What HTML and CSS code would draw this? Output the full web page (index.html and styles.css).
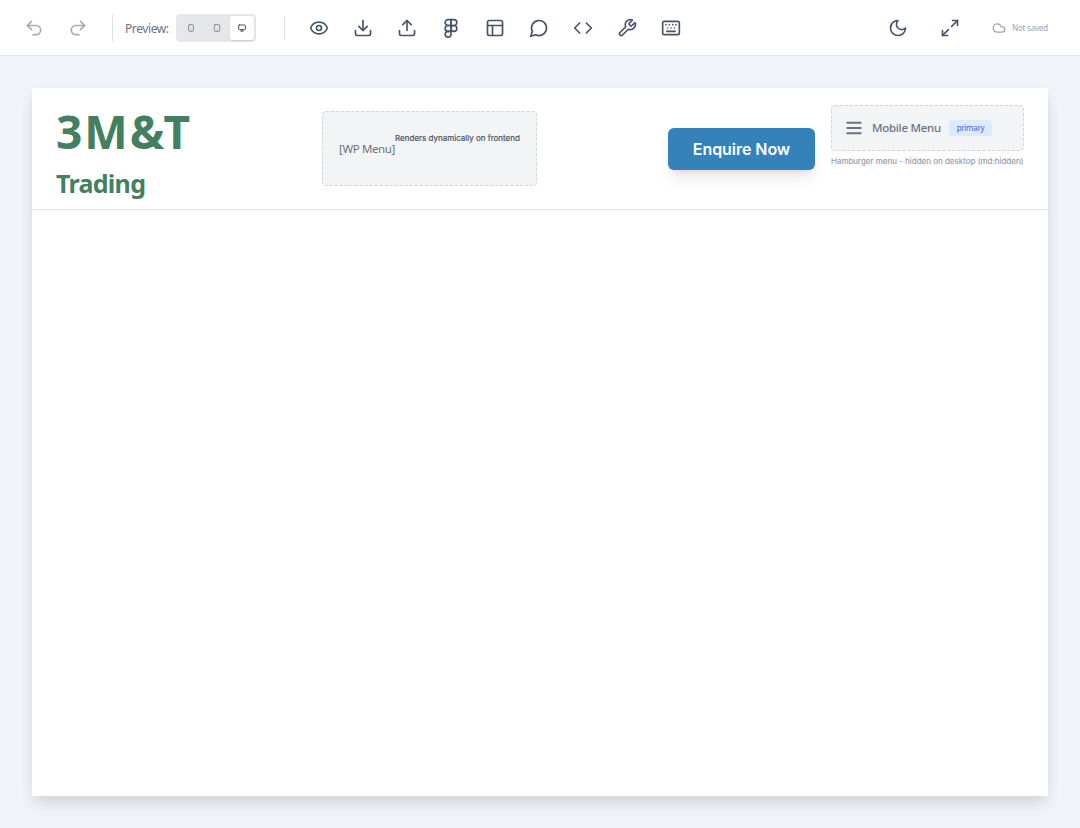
FILE: index.html
```html
<!DOCTYPE html>
<html lang="en">
<head>
    <meta charset="UTF-8">
    <meta name="viewport" content="width=device-width, initial-scale=1.0">
    <title>Page Builder</title>
    <link rel="stylesheet" href="styles.css">
</head>
<body>

    <div class="toolbar">
        <div class="tool-group">
            <button class="tool-button disabled" title="Undo">
                <svg class="icon" viewBox="0 0 24 24"><path d="M9 14 4 9l5-5"/><path d="M4 9h10.5a5.5 5.5 0 0 1 0 11H11"/></svg>
            </button>
            <button class="tool-button disabled" title="Redo">
                <svg class="icon" viewBox="0 0 24 24"><path d="m15 14 5-5-5-5"/><path d="M20 9H9.5a5.5 5.5 0 0 0 0 11H13"/></svg>
            </button>
        </div>

        <div class="preview">
            <span class="preview-label">Preview:</span>
            <div class="device-switch">
                <button class="device" title="Mobile">
                    <svg class="icon" viewBox="0 0 24 24"><rect x="5" y="2" width="14" height="20" rx="2"/><path d="M12 18h.01"/></svg>
                </button>
                <button class="device" title="Tablet">
                    <svg class="icon" viewBox="0 0 24 24"><rect x="4" y="2" width="16" height="20" rx="2"/><path d="M12 18h.01"/></svg>
                </button>
                <button class="device active" title="Desktop">
                    <svg class="icon" viewBox="0 0 24 24"><rect x="2" y="3" width="20" height="14" rx="2"/><path d="M8 21h8M12 17v4"/></svg>
                </button>
            </div>
        </div>

        <div class="tool-group actions">
            <button class="tool-button" title="Preview">
                <svg class="icon" viewBox="0 0 24 24"><path d="M2.06 12.35a1 1 0 0 1 0-.7 10.75 10.75 0 0 1 19.88 0 1 1 0 0 1 0 .7 10.75 10.75 0 0 1-19.88 0"/><circle cx="12" cy="12" r="3"/></svg>
            </button>
            <button class="tool-button" title="Import">
                <svg class="icon" viewBox="0 0 24 24"><path d="M21 15v4a2 2 0 0 1-2 2H5a2 2 0 0 1-2-2v-4"/><path d="m7 10 5 5 5-5"/><path d="M12 15V3"/></svg>
            </button>
            <button class="tool-button" title="Export">
                <svg class="icon" viewBox="0 0 24 24"><path d="M21 15v4a2 2 0 0 1-2 2H5a2 2 0 0 1-2-2v-4"/><path d="m17 8-5-5-5 5"/><path d="M12 3v12"/></svg>
            </button>
            <button class="tool-button" title="Figma">
                <svg class="icon" viewBox="0 0 24 24"><path d="M5 5.5A3.5 3.5 0 0 1 8.5 2H12v7H8.5A3.5 3.5 0 0 1 5 5.5z"/><path d="M12 2h3.5a3.5 3.5 0 1 1 0 7H12V2z"/><path d="M12 12.5a3.5 3.5 0 1 1 7 0 3.5 3.5 0 1 1-7 0z"/><path d="M5 19.5A3.5 3.5 0 0 1 8.5 16H12v3.5a3.5 3.5 0 1 1-7 0z"/><path d="M5 12.5A3.5 3.5 0 0 1 8.5 9H12v7H8.5A3.5 3.5 0 0 1 5 12.5z"/></svg>
            </button>
            <button class="tool-button" title="Templates">
                <svg class="icon" viewBox="0 0 24 24"><rect x="3" y="3" width="18" height="18" rx="2"/><path d="M3 9h18"/><path d="M9 21V9"/></svg>
            </button>
            <button class="tool-button" title="Chat">
                <svg class="icon" viewBox="0 0 24 24"><path d="M7.9 20A9 9 0 1 0 4 16.1L2 22Z"/></svg>
            </button>
            <button class="tool-button" title="Code">
                <svg class="icon" viewBox="0 0 24 24"><path d="m16 18 6-6-6-6"/><path d="m8 6-6 6 6 6"/></svg>
            </button>
            <button class="tool-button" title="Tools">
                <svg class="icon" viewBox="0 0 24 24"><path d="M14.7 6.3a1 1 0 0 0 0 1.4l1.6 1.6a1 1 0 0 0 1.4 0l3.77-3.77a6 6 0 0 1-7.94 7.94l-6.91 6.91a2.12 2.12 0 0 1-3-3l6.91-6.91a6 6 0 0 1 7.94-7.94l-3.76 3.76z"/></svg>
            </button>
            <button class="tool-button" title="Shortcuts">
                <svg class="icon" viewBox="0 0 24 24"><rect x="2" y="4" width="20" height="16" rx="2"/><path d="M6 8h.01M10 8h.01M14 8h.01M18 8h.01M8 12h.01M12 12h.01M16 12h.01M7 16h10"/></svg>
            </button>
        </div>

        <div class="status">
            <button class="tool-button" title="Dark mode">
                <svg class="icon" viewBox="0 0 24 24"><path d="M12 3a6 6 0 0 0 9 9 9 9 0 1 1-9-9Z"/></svg>
            </button>
            <button class="tool-button" title="Fullscreen">
                <svg class="icon" viewBox="0 0 24 24"><path d="M15 3h6v6"/><path d="m21 3-7 7"/><path d="m3 21 7-7"/><path d="M9 21H3v-6"/></svg>
            </button>
            <div class="save-state">
                <svg class="icon" viewBox="0 0 24 24"><path d="M17.5 19H9a7 7 0 1 1 6.71-9h1.79a4.5 4.5 0 1 1 0 9Z"/></svg>
                <span>Not saved</span>
            </div>
        </div>
    </div>

    <main class="canvas">
        <div class="page">
            <header class="site-header">
                <div class="brand">
                    <h1>3M&amp;T</h1>
                    <h2>Trading</h2>
                </div>

                <div class="wp-menu">
                    <span class="wp-menu-name">[WP Menu]</span>
                    <span class="wp-menu-note">Renders dynamically on frontend</span>
                </div>

                <div class="header-actions">
                    <a class="enquire">Enquire Now</a>
                    <div class="mobile-menu">
                        <div class="mobile-menu-box">
                            <svg class="icon" viewBox="0 0 24 24"><path d="M3 5h18M3 12h18M3 19h18"/></svg>
                            <span class="mobile-menu-name">Mobile Menu</span>
                            <span class="tag">primary</span>
                        </div>
                        <p class="mobile-menu-note">Hamburger menu - hidden on desktop (md:hidden)</p>
                    </div>
                </div>
            </header>
        </div>
    </main>

</body>
</html>
```
FILE: styles.css
```css
* {
    box-sizing: border-box;
}

body {
    margin: 0;
    height: 100vh;
    display: flex;
    flex-direction: column;
    overflow: hidden;
    background-color: #f0f3f8;
    font-family: 'Noto Sans', 'Open Sans', sans-serif;
    color: #475569;
}

h1, h2, p {
    margin: 0;
}

button {
    padding: 0;
    border: none;
    background: none;
    color: inherit;
    cursor: pointer;
}

.icon {
    display: block;
    flex: none;
    width: 20px;
    height: 20px;
    fill: none;
    stroke: currentColor;
    stroke-width: 2;
    stroke-linecap: round;
    stroke-linejoin: round;
}

/* Toolbar */
.toolbar {
    display: flex;
    align-items: center;
    flex: none;
    height: 56px;
    padding: 0 32px 0 16px;
    background-color: #ffffff;
    border-bottom: 1px solid #e2e4ec;
}

.tool-group {
    display: flex;
    gap: 8px;
}

.tool-button {
    display: flex;
    align-items: center;
    justify-content: center;
    width: 36px;
    height: 36px;
}

.disabled {
    color: #a3aab5;
}

.preview {
    display: flex;
    align-items: center;
    gap: 8px;
    height: 28px;
    margin-left: 16px;
    padding-left: 12px;
    border-left: 1px solid #dfe2e8;
}

.preview-label {
    width: 43px;
    padding-top: 2px;
    font-size: 12px;
    letter-spacing: -0.4px;
    white-space: nowrap;
    color: #6b7280;
}

.device-switch {
    display: flex;
    gap: 1px;
    width: 80px;
    height: 28px;
    padding: 2px;
    background-color: #e5e7eb;
    border-radius: 4px;
}

.device {
    display: flex;
    align-items: center;
    justify-content: center;
    width: 25px;
    height: 24px;
    border-radius: 3px;
    color: #868d98;
}

.device .icon {
    width: 8px;
    height: 8px;
    stroke-width: 3;
}

.device.active {
    width: 24px;
    background-color: #ffffff;
    color: #4b5563;
    box-shadow: 0 1px 2px rgba(0, 0, 0, 0.1);
}

.actions {
    position: relative;
    margin-left: 28px;
    padding-left: 17px;
}

.actions::before {
    content: '';
    position: absolute;
    left: 0;
    top: 6px;
    width: 1px;
    height: 24px;
    background-color: #e2e5ea;
}

.status {
    display: flex;
    align-items: center;
    gap: 16px;
    margin-left: auto;
}

.save-state {
    display: flex;
    align-items: center;
    gap: 6px;
    width: 56px;
    margin-left: 8px;
    font-size: 8px;
    letter-spacing: -0.2px;
    white-space: nowrap;
    color: #9ca3af;
}

.save-state .icon {
    width: 14px;
    height: 14px;
}

/* Page canvas */
.canvas {
    display: flex;
    flex: 1;
    padding: 32px;
}

.page {
    flex: 1;
    background-color: #ffffff;
    box-shadow: 0 10px 15px -3px rgba(0, 0, 0, 0.1), 0 4px 16px -2px rgba(0, 0, 0, 0.06);
}

.site-header {
    display: flex;
    align-items: center;
    justify-content: space-between;
    height: 122px;
    padding: 0 24px;
    border-bottom: 1px solid #e2e5e9;
    box-shadow: 0 1px 2px rgba(0, 0, 0, 0.05);
}

.brand {
    width: 135px;
    padding-top: 11px;
    color: #438061;
    white-space: nowrap;
}

.brand h1 {
    font-size: 46px;
    line-height: 58px;
    font-weight: 700;
    letter-spacing: 2px;
}

.brand h2 {
    font-size: 25px;
    line-height: 46px;
    font-weight: 700;
    letter-spacing: -0.7px;
}

.wp-menu {
    display: flex;
    justify-content: center;
    width: 215px;
    height: 75px;
    padding-top: 20px;
    background-color: #f3f4f6;
    border: 1px dashed #d1d5db;
    border-radius: 4px;
    white-space: nowrap;
}

.wp-menu-name {
    width: 56px;
    font-size: 11.5px;
    line-height: 34px;
    letter-spacing: -0.4px;
    color: #6b7280;
}

.wp-menu-note {
    font-family: Inter, sans-serif;
    font-size: 8px;
    line-height: 13px;
    -webkit-text-stroke: 0.2px currentColor;
    color: #4b5563;
}

.header-actions {
    display: flex;
    align-items: center;
    gap: 16px;
}

.enquire {
    width: 147px;
    height: 42px;
    background-color: #3581b9;
    border-radius: 6px;
    box-shadow: 0 10px 15px -3px rgba(0, 0, 0, 0.1), 0 4px 6px -4px rgba(0, 0, 0, 0.1);
    font-family: Inter, sans-serif;
    font-size: 16px;
    font-weight: 600;
    line-height: 42px;
    letter-spacing: -0.05px;
    text-align: center;
    color: #ffffff;
}

.mobile-menu {
    width: 193px;
    height: 88px;
}

.mobile-menu-box {
    display: flex;
    align-items: center;
    height: 46px;
    padding: 0 13px;
    background-color: #f3f4f6;
    border: 1px dashed #d1d5db;
    border-radius: 4px;
    color: #6b7280;
}

.mobile-menu-box .icon {
    width: 18px;
    height: 18px;
    stroke-width: 2.4;
}

.mobile-menu-name {
    width: 69px;
    margin-left: 9px;
    font-size: 11.5px;
    font-weight: 500;
    letter-spacing: -0.3px;
    white-space: nowrap;
}

.tag {
    width: 43px;
    height: 16px;
    margin-left: 8px;
    background-color: #dbeafe;
    border-radius: 3px;
    font-size: 8px;
    line-height: 16px;
    letter-spacing: -0.3px;
    text-align: center;
    color: #3b66e5;
}

.mobile-menu-note {
    margin-top: 4px;
    font-family: Inter, sans-serif;
    font-size: 8px;
    line-height: 12px;
    -webkit-text-stroke: 0.2px currentColor;
    white-space: nowrap;
    color: #9ca3af;
}
```
